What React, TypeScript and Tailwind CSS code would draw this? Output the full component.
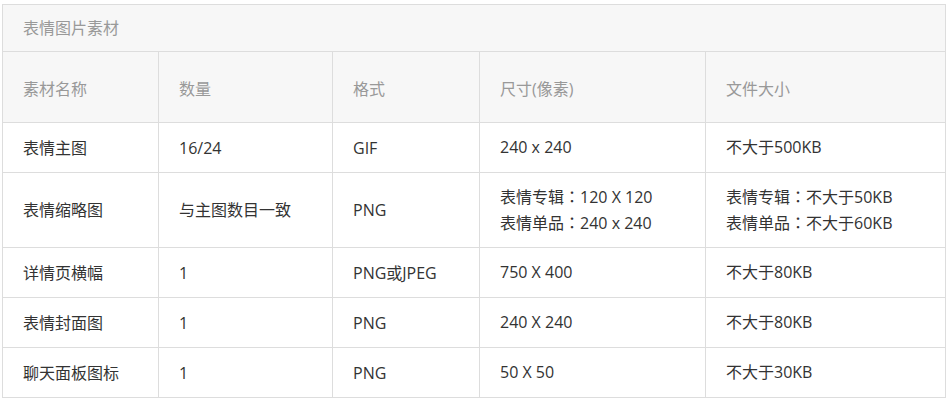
const rows: [string, string, string, string[], string[]][] = [
  ["表情主图", "16/24", "GIF", ["240 x 240"], ["不大于500KB"]],
  ["表情缩略图", "与主图数目一致", "PNG", ["表情专辑：120 X 120", "表情单品：240 x 240"], ["表情专辑：不大于50KB", "表情单品：不大于60KB"]],
  ["详情页横幅", "1", "PNG或JPEG", ["750 X 400"], ["不大于80KB"]],
  ["表情封面图", "1", "PNG", ["240 X 240"], ["不大于80KB"]],
  ["聊天面板图标", "1", "PNG", ["50 X 50"], ["不大于30KB"]],
];

const headers = ["素材名称", "数量", "格式", "尺寸(像素)", "文件大小"];

// full-width colon drawn centred, like the reference's system font
function Line({ text }: { text: string }) {
  const [label, rest] = text.split("：");
  if (rest === undefined) return <div>{text}</div>;
  return (
    <div>
      {label}
      <span style={{ fontFamily: '"Noto Sans CJK TC", sans-serif' }}>：</span>
      {rest}
    </div>
  );
}

export default function App() {
  return (
    <main
      className="bg-white w-[949px] h-[401px] pt-[4px] pl-[2px] text-[16px]"
      style={{ fontFamily: '"Open Sans", "Noto Sans CJK SC", sans-serif' }}
    >
      <table className="w-[943px] border-collapse table-fixed">
        <colgroup>
          <col className="w-[156px]" />
          <col className="w-[174px]" />
          <col className="w-[147px]" />
          <col className="w-[226px]" />
          <col className="w-[240px]" />
        </colgroup>
        <thead>
          <tr>
            <th colSpan={5} className="h-[47px] border border-[#dddddd] bg-[#f7f7f7] pl-[20px] text-left font-normal text-[#999999]">
              表情图片素材
            </th>
          </tr>
          <tr>
            {headers.map((h) => (
              <th key={h} className="h-[71px] border border-[#dddddd] bg-[#f7f7f7] pl-[20px] pt-[3px] text-left font-normal text-[#999999]">
                {h}
              </th>
            ))}
          </tr>
        </thead>
        <tbody>
          {rows.map(([name, count, format, size, file]) => (
            <tr key={name} className="text-[#333333]">
              <td className={`${size.length > 1 ? "h-[75px]" : "h-[50px]"} border border-[#dddddd] pl-[20px]`}>{name}</td>
              <td className="border border-[#dddddd] pl-[20px]">{count}</td>
              <td className="border border-[#dddddd] pl-[20px]">{format}</td>
              <td className="border border-[#dddddd] pl-[20px] leading-[25px]">
                {size.map((s) => (
                  <Line key={s} text={s} />
                ))}
              </td>
              <td className="border border-[#dddddd] pl-[20px] leading-[25px]">
                {file.map((s) => (
                  <Line key={s} text={s} />
                ))}
              </td>
            </tr>
          ))}
        </tbody>
      </table>
    </main>
  );
}
